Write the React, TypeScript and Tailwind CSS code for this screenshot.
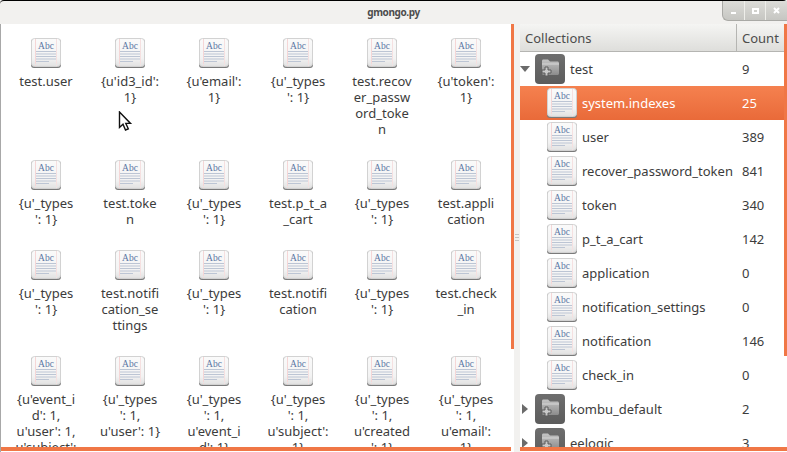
import React from "react";

const font = "font-['Noto_Sans','Open_Sans',sans-serif]";

function DocIcon({ id }: { id: string }) {
  return (
    <svg width="30" height="30" viewBox="0 0 30 30" className="block shrink-0">
      <defs>
        <linearGradient id={id} x1="0" y1="0" x2="0" y2="1">
          <stop offset="0" stopColor="#fafafa" />
          <stop offset="0.7" stopColor="#f3f3f3" />
          <stop offset="1" stopColor="#e0e0e0" />
        </linearGradient>
      </defs>
      <rect x="0" y="1" width="30" height="29" rx="3" fill="#7a7a7a" />
      <rect x="0.5" y="0.5" width="29" height="28" rx="3" fill={`url(#${id})`} stroke="#d2d2d2" />
      <line x1="4.5" y1="1" x2="4.5" y2="28" stroke="#f5d6d6" />
      <line x1="25.5" y1="1" x2="25.5" y2="28" stroke="#f5e0e0" />
      <text x="15" y="10.5" textAnchor="middle" fontFamily="'Liberation Serif', serif" fontSize="9.5" fill="#5a75a3">Abc</text>
      {[13, 15.5, 18, 20.5, 23].map((y, i) => (
        <line key={y} x1="5" y1={y + 0.5} x2={i === 4 ? 18 : 25} y2={y + 0.5} stroke="#bcc5d4" strokeWidth="1" />
      ))}
      <line x1="2" y1="26.5" x2="28" y2="26.5" stroke="#e6e6e6" />
    </svg>
  );
}

function FolderIcon({ id }: { id: string }) {
  return (
    <svg width="30" height="30" viewBox="0 0 30 30" className="block shrink-0">
      <defs>
        <linearGradient id={id} x1="0" y1="0" x2="0" y2="1">
          <stop offset="0" stopColor="#6e6e6e" />
          <stop offset="1" stopColor="#5c5c5c" />
        </linearGradient>
        <linearGradient id={`${id}f`} x1="0" y1="0" x2="0" y2="1">
          <stop offset="0" stopColor="#c4c4c4" />
          <stop offset="1" stopColor="#8c8c8c" />
        </linearGradient>
      </defs>
      <rect x="0" y="0" width="30" height="30" rx="4" fill={`url(#${id})`} />
      <path d="M7 7 C7 6.2 7.6 5.5 8.4 5.5 H13 L15 7.5 H22.5 C23.3 7.5 24 8.2 24 9 V19.5 C24 20.3 23.3 21 22.5 21 H8.5 C7.7 21 7 20.3 7 19.5 Z" fill={`url(#${id}f)`} />
      <path d="M7 10 H24" stroke="#d6d6d6" strokeWidth="1" />
      <path d="M7 16 H10 V13 H13 V16 H16 V19 H13 V22 H10 V19 H7 Z" fill="#c9c9c9" stroke="#5c5c5c" strokeWidth="1" />
    </svg>
  );
}

const grid: { lines: string[] }[][] = [
  [["test.user"], ["{u'id3_id':", "1}"], ["{u'email':", "1}"], ["{u'_types", "': 1}"], ["test.recov", "er_passw", "ord_toke", "n"], ["{u'token':", "1}"]],
  [["{u'_types", "': 1}"], ["test.toke", "n"], ["{u'_types", "': 1}"], ["test.p_t_a", "_cart"], ["{u'_types", "': 1}"], ["test.appli", "cation"]],
  [["{u'_types", "': 1}"], ["test.notifi", "cation_se", "ttings"], ["{u'_types", "': 1}"], ["test.notifi", "cation"], ["{u'_types", "': 1}"], ["test.check", "_in"]],
  [["{u'event_i", "d': 1,", "u'user': 1,", "u'subject':"], ["{u'_types", "': 1,", "u'user': 1}"], ["{u'_types", "': 1,", "u'event_i", "d': 1}"], ["{u'_types", "': 1,", "u'subject':", "1}"], ["{u'_types", "': 1,", "u'created", "': 1}"], ["{u'_types", "': 1,", "u'email':", "1}"]],
].map((r) => r.map((lines) => ({ lines })));

const children: [string, string, boolean][] = [
  ["system.indexes", "25", true],
  ["user", "389", false],
  ["recover_password_token", "841", false],
  ["token", "340", false],
  ["p_t_a_cart", "142", false],
  ["application", "0", false],
  ["notification_settings", "0", false],
  ["notification", "146", false],
  ["check_in", "0", false],
];

function Arrow({ open }: { open: boolean }) {
  return (
    <svg width="15" height="14" viewBox="0 0 15 14" className="block shrink-0">
      {open ? <path d="M0 4 H10 L5 10 Z" fill="#6b6b6b" /> : <path d="M2 2 L8 7 L2 12 Z" fill="#6b6b6b" />}
    </svg>
  );
}

function DbRow({ name, count, open, id }: { name: string; count: string; open: boolean; id: string }) {
  return (
    <div className="flex h-[34px] shrink-0 items-center text-[#3c3c3c]">
      <div className="w-[15px]"><Arrow open={open} /></div>
      <FolderIcon id={id} />
      <div className="ml-[5px] flex-1">{name}</div>
      <div className="w-[47px] pl-[5px]">{count}</div>
    </div>
  );
}

export default function App() {
  return (
    <div className={`flex h-[452px] w-[787px] flex-col overflow-hidden bg-[#f2f1ef] text-[13px] leading-4 text-[#3c3c3c] ${font}`}>
      <div className="grid h-6 shrink-0 grid-cols-[1fr_auto_1fr] items-start rounded-t-[4px] border-t border-black bg-[#f2f1ef]">
        <div />
        <div className="pt-[3px] text-[10px] font-bold leading-4 tracking-[-0.4px] text-[#4c4c4c]">gmongo.py</div>
        <div className="flex justify-end">
          <div className="flex h-5 w-[65px] overflow-hidden rounded-bl-[6px] border-b border-l border-[#a9a9a5] bg-gradient-to-b from-[#dcdcd8] to-[#c6c6c2]">
            <div className="flex flex-1 items-end justify-center border-r border-[#eeeeea] pb-[6px]"><div className="h-[2px] w-[5px] bg-white" /></div>
            <div className="flex flex-1 items-center justify-center border-r border-[#eeeeea]"><div className="h-[6px] w-[7px] border-2 border-white" /></div>
            <div className="flex flex-1 items-center justify-center">
              <svg width="7" height="7" viewBox="0 0 7 7"><path d="M1 1 L6 6 M6 1 L1 6" stroke="#fff" strokeWidth="2" /></svg>
            </div>
          </div>
        </div>
      </div>

      <div className="flex min-h-0 flex-1">
        <div className="flex w-[514px] shrink-0 flex-col border-l border-[#a8a8a8]">
          <div className="relative flex min-h-0 flex-1">
            <div className="min-w-0 flex-1 overflow-hidden bg-white pl-[3px] pt-[14px]">
              <div className="grid grid-cols-[repeat(6,84px)] grid-rows-[122px_90px_106px_106px]">
                {grid.flatMap((row, r) =>
                  row.map((c, i) => (
                    <div key={`${r}-${i}`} className="flex flex-col items-center">
                      <DocIcon id={`d${r}${i}`} />
                      <div className="mt-[5px] whitespace-nowrap text-center">
                        {c.lines.map((l, k) => (
                          <div key={k}>{l}</div>
                        ))}
                      </div>
                    </div>
                  ))
                )}
              </div>
            </div>
            <div className="w-[3px] shrink-0 bg-white">
              <div className="h-[325px] bg-[#f07746]" />
            </div>
            <svg width="15" height="21" viewBox="0 0 15 21" className="absolute left-[117px] top-[87px]">
              <path d="M1.5 1 V16.5 L5 13.3 L7.5 19 L10.3 17.8 L7.8 12.4 H12.5 Z" fill="#fff" stroke="#111" strokeWidth="1.4" />
            </svg>
          </div>
          <div className="flex h-[5px] shrink-0 flex-col bg-white">
            <div className="h-1 w-[510px] bg-[#f07746]" />
          </div>
        </div>

        <div className="flex w-[6px] shrink-0 flex-col items-center justify-center gap-[2px] bg-[#f2f1ef] pb-[2px]">
          <div className="h-px w-[4px] bg-[#c4c4c2]" />
          <div className="h-px w-[4px] bg-[#c4c4c2]" />
          <div className="h-px w-[4px] bg-[#c4c4c2]" />
        </div>

        <div className="flex min-w-0 flex-1 flex-col">
          <div className="flex min-h-0 flex-1">
            <div className="flex min-w-0 flex-1 flex-col overflow-hidden bg-white">
              <div className="flex h-7 shrink-0 items-center border-b border-[#b5b5b2] bg-gradient-to-b from-[#f5f5f3] to-[#dededb] text-[#4c4c4c]">
                <div className="flex h-full flex-1 items-center border-r border-[#b5b5b2] pl-[5px]">Collections</div>
                <div className="w-[47px] pl-[5px]">Count</div>
              </div>
              <DbRow name="test" count="9" open id="f1" />
              {children.map(([name, count, sel], i) => (
                <div
                  key={name}
                  className={`flex h-[34px] shrink-0 items-center pl-[27px] ${sel ? "bg-gradient-to-b from-[#f5814f] to-[#e96a39] text-white" : "text-[#3c3c3c]"}`}
                >
                  <DocIcon id={`c${i}`} />
                  <div className="ml-[5px] min-w-0 flex-1 whitespace-nowrap">{name}</div>
                  <div className="w-[47px] pl-[5px]">{count}</div>
                </div>
              ))}
              <DbRow name="kombu_default" count="2" open={false} id="f2" />
              <DbRow name="eelogic" count="3" open={false} id="f3" />
            </div>
            <div className="w-[3px] shrink-0 bg-white">
              <div className="h-[332px] bg-[#f07746]" />
            </div>
          </div>
          <div className="flex h-[5px] shrink-0 flex-col bg-white">
            <div className="h-1 w-[267px] bg-[#f07746]" />
          </div>
        </div>
      </div>
    </div>
  );
}
